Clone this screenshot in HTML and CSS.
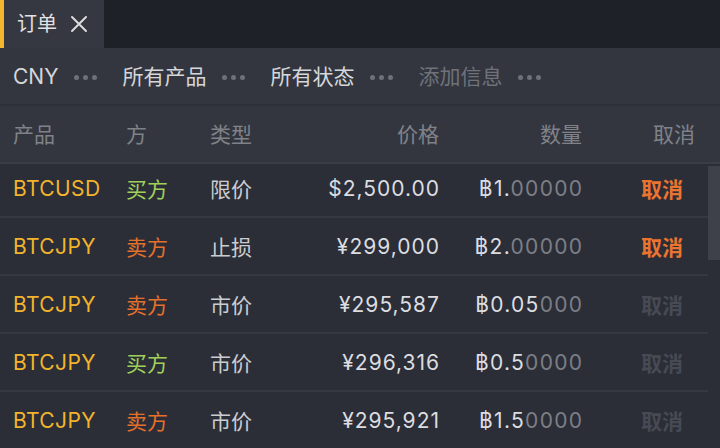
FILE: index.html
```html
<!DOCTYPE html>
<html lang="zh-CN">
<head>
<meta charset="utf-8">
<title>订单</title>
<link rel="stylesheet" href="styles.css">
</head>
<body>
<div class="app">
  <div class="tabs">
    <div class="tab active">
      <span class="tab-title">订单</span>
      <svg class="tab-close" width="18" height="18" viewBox="0 0 18 18"><path d="M2 2 L16 16 M16 2 L2 16" stroke="#dcdcde" stroke-width="2" stroke-linecap="round" fill="none"/></svg>
    </div>
  </div>
  <div class="filters">
    <span class="filter">CNY</span><span class="dots"><i></i><i></i><i></i></span>
    <span class="filter">所有产品</span><span class="dots"><i></i><i></i><i></i></span>
    <span class="filter">所有状态</span><span class="dots"><i></i><i></i><i></i></span>
    <span class="filter muted">添加信息</span><span class="dots"><i></i><i></i><i></i></span>
  </div>
  <div class="thead grid">
    <span>产品</span><span>方</span><span>类型</span><span class="r">价格</span><span class="r">数量</span><span class="r">取消</span>
  </div>
  <div class="body">
    <div class="rows">
      <div class="row grid">
        <span class="sym">BTCUSD</span><span class="buy">买方</span><span class="type">限价</span><span class="r price">$2,500.00</span><span class="r qty">฿1.<em>00000</em></span><span class="r cancel">取消</span>
      </div>
      <div class="row grid">
        <span class="sym">BTCJPY</span><span class="sell">卖方</span><span class="type">止损</span><span class="r price">¥299,000</span><span class="r qty">฿2.<em>00000</em></span><span class="r cancel">取消</span>
      </div>
      <div class="row grid">
        <span class="sym">BTCJPY</span><span class="sell">卖方</span><span class="type">市价</span><span class="r price">¥295,587</span><span class="r qty">฿0.05<em>000</em></span><span class="r cancel off">取消</span>
      </div>
      <div class="row grid">
        <span class="sym">BTCJPY</span><span class="buy">买方</span><span class="type">市价</span><span class="r price">¥296,316</span><span class="r qty">฿0.5<em>0000</em></span><span class="r cancel off">取消</span>
      </div>
      <div class="row grid">
        <span class="sym">BTCJPY</span><span class="sell">卖方</span><span class="type">市价</span><span class="r price">¥295,921</span><span class="r qty">฿1.5<em>0000</em></span><span class="r cancel off">取消</span>
      </div>
    </div>
    <div class="scrollbar"><div class="thumb"></div></div>
  </div>
</div>
</body>
</html>
```
FILE: styles.css
```css
html, body {
  margin: 0;
  padding: 0;
  background: #2b2e37;
}
body {
  width: 720px;
  height: 448px;
  overflow: hidden;
  font-family: "Inter", "Noto Sans CJK SC", "DejaVu Sans", sans-serif;
  font-size: 21px;
}
.app {
  display: flex;
  flex-direction: column;
  height: 448px;
}
.tabs {
  height: 48px;
  background: #1f2128;
  display: flex;
  flex: none;
}
.tab {
  display: flex;
  align-items: center;
  background: #363841;
  border-left: 4px solid #f4b62c;
  padding: 0 16px 0 13px;
  white-space: nowrap;
}
.tab-title {
  color: #e2e2e4;
  font-size: 20px;
  margin-right: 13px;
  line-height: 1;
}
.tab-close {
  display: block;
}
.filters {
  flex: none;
  height: 56px;
  background: #33363f;
  border-bottom: 2px solid #2e3039;
  display: flex;
  align-items: center;
  padding-left: 13px;
  white-space: nowrap;
}
.filter {
  color: #d6d7da;
  line-height: 1;
}
.filter.muted {
  color: #6f727a;
}
.dots {
  display: flex;
  gap: 4px;
  margin: 2px 25px 0 16px;
}
.dots i {
  width: 5px;
  height: 5px;
  border-radius: 50%;
  background: #6e717a;
}
.grid {
  display: grid;
  grid-template-columns: 113px 84px 80px 149px 143px 1fr;
  align-items: center;
  padding: 0 25px 0 13px;
  white-space: nowrap;
}
.r {
  text-align: right;
}
.thead {
  flex: none;
  height: 53px;
  padding-bottom: 3px;
  background: #33363f;
  border-bottom: 2px solid #3a3d46;
  color: #808289;
  position: relative;
  z-index: 1;
}
.body {
  flex: 1;
  display: flex;
  overflow: hidden;
}
.rows {
  flex: 1;
  margin-top: -4px;
}
.row {
  height: 56px;
  border-bottom: 2px solid #353841;
}
.sym { color: #f3b42b; letter-spacing: 0.4px; }
.buy { color: #a0d05a; }
.sell { color: #e4702c; }
.type { color: #cbccd0; }
.price { color: #dcdde0; letter-spacing: 1px; margin-right: -1px; }
.qty { color: #dcdde0; letter-spacing: 1.3px; margin-right: -1.3px; }
.qty em { font-style: normal; color: #7c7e86; }
.cancel { color: #ea7430; font-weight: 700; }
.cancel.off { color: #474a54; }
.scrollbar {
  width: 12px;
  flex: none;
  padding-top: 2px;
}
.thumb {
  height: 94px;
  background: #3e4149;
}
```
